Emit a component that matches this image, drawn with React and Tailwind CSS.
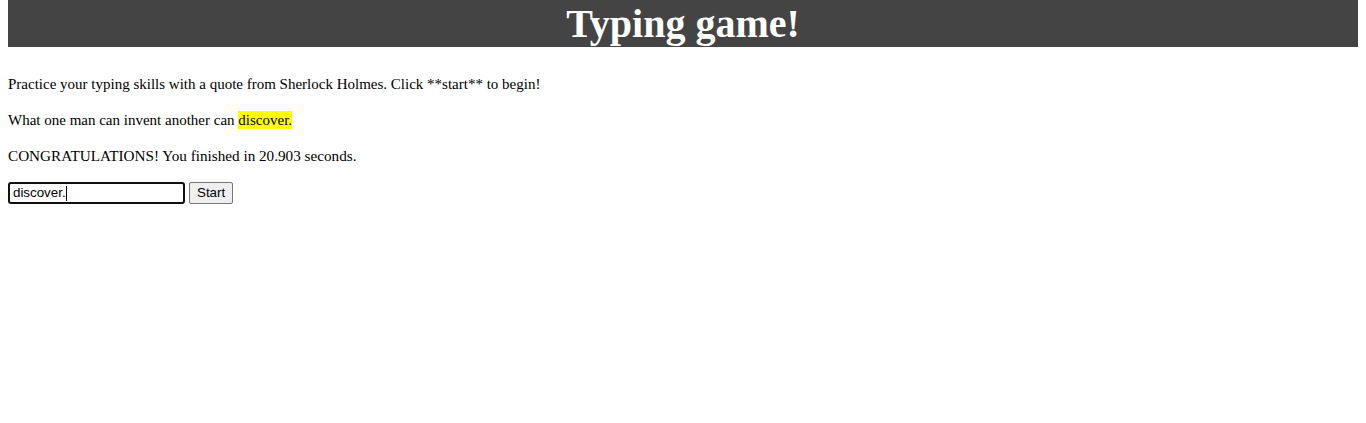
export default function App() {
  return (
    <div className="mx-2 font-['Liberation_Serif',serif] text-black">
      <h1 className="bg-[#444444] text-center text-[40px] font-bold leading-[47px] text-white mb-[27px]">
        Typing game!
      </h1>
      <p className="text-[15px] leading-[20px] mb-4">
        Practice your typing skills with a quote from Sherlock Holmes. Click **start** to begin!
      </p>
      <p className="text-[15px] leading-[20px] mb-4">
        What one man can invent another can <span className="bg-[#ffff00] py-[1px]">discover.</span>
      </p>
      <p className="text-[15.2px] leading-[20px] mb-4">
        CONGRATULATIONS! You finished in 20.903 seconds.
      </p>
      <div className="flex items-center gap-1 font-['Liberation_Sans',sans-serif] text-[13.33px]">
        <div className="w-[177px] h-[22px] border-2 border-[#101010] rounded-[3px] flex items-center pl-[3px] bg-white">
          <span>discover.</span>
          <span className="w-px h-[15px] bg-black"></span>
        </div>
        <button className="h-[22px] px-[7px] border border-[#767676] rounded-[2px] bg-[#efefef] leading-none">
          Start
        </button>
      </div>
    </div>
  );
}
